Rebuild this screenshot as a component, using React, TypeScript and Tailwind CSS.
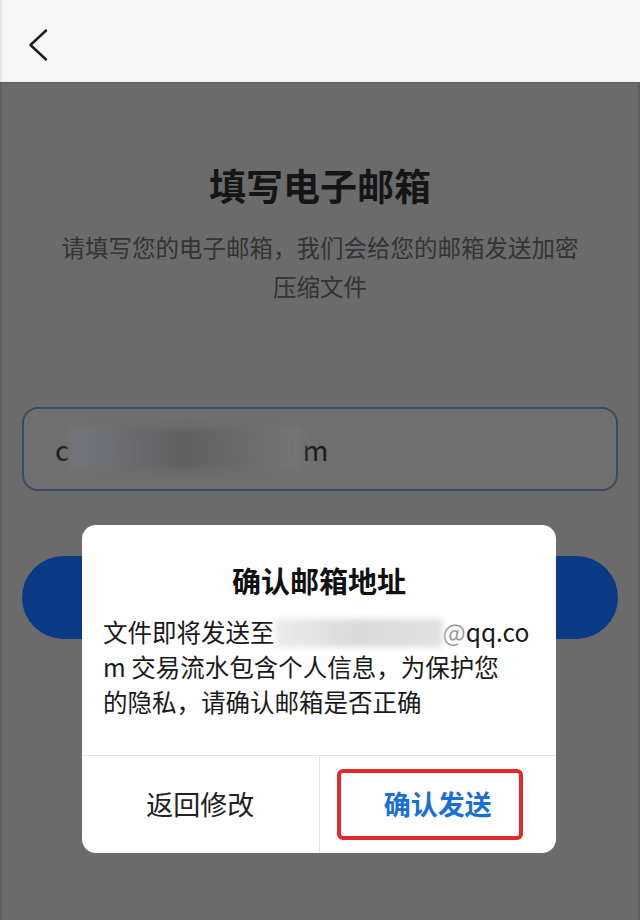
import React from 'react';

const cjk = { fontFamily: '"Noto Sans CJK SC", "Noto Sans", sans-serif' };

function BackIcon() {
  return (
    <svg width="20" height="32" viewBox="0 0 20 32" fill="none">
      <path d="M18 1.5 L2.5 16 L18 30.5" stroke="#1b1b1b" strokeWidth="2.4" strokeLinecap="round" strokeLinejoin="round" />
    </svg>
  );
}

export default function App() {
  return (
    <div className="w-[640px] h-[920px] flex flex-col overflow-hidden" style={cjk}>
      {/* top bar */}
      <div className="h-[82px] shrink-0 bg-[#f6f6f6] border-l-2 border-[#e6e6e6] flex items-center pl-[26px]">
        <div className="mt-[8px]">
          <BackIcon />
        </div>
      </div>

      {/* page behind the mask */}
      <div className="relative flex-1 bg-[#6b6b6b] border-t border-[#5c5c5c] border-x-2 border-x-[#5e5e5e]">
        <div className="flex flex-col items-center pt-[77px]">
          <h1 className="text-[37px] leading-[50px] font-bold text-[#151515]">填写电子邮箱</h1>
          <p className="mt-[18px] w-[530px] text-center text-[23.5px] leading-[39px] text-[#333]">
            请填写您的电子邮箱，我们会给您的邮箱发送加密压缩文件
          </p>

          <div className="mt-[101px] w-[596px] h-[84px] rounded-[16px] border-2 border-[#3b4a66] bg-[#6f6f6f] flex items-center pl-[31px]">
            <span className="text-[28px] text-[#1c1c1c] tracking-tight">c</span>
            <span className="mx-[1px] w-[232px] h-[44px] rounded-md bg-gradient-to-r from-[#767680] via-[#606060] to-[#777777] blur-[5px]" />
            <span className="text-[28px] text-[#1c1c1c]">m</span>
          </div>

          <div className="mt-[65px] w-[596px] h-[83px] rounded-full bg-[#0b3a87]" />
        </div>

        {/* confirm dialog */}
        <div className="absolute left-[80px] top-[442px] w-[474px] h-[328px] rounded-[14px] bg-white flex flex-col">
          <div className="flex-1 px-[21px] pt-[35px]">
            <h2 className="text-center text-[29px] leading-[40px] font-bold text-[#111]">确认邮箱地址</h2>
            <p className="mt-[14px] text-[24.5px] leading-[35px] text-[#1a1a1a] whitespace-nowrap">
              文件即将发送至
              <span className="relative inline-block align-middle w-[168px] h-[28px] -mt-[4px]">
                <span className="absolute inset-0 bg-gradient-to-r from-[#ececec] via-[#d9d9d9] to-[#e2e2e2] blur-[3px]" />
              </span>
              <span className="text-[#9a9a9a]">@</span>
              qq.co
              <br />
              m 交易流水包含个人信息，为保护您
              <br />
              的隐私，请确认邮箱是否正确
            </p>
          </div>
          <div className="h-[98px] border-t border-[#e4e4e4] flex">
            <div className="flex-1 flex items-center justify-center text-[27px] text-[#222]">返回修改</div>
            <div className="relative flex-1 border-l border-[#e4e4e4] flex items-center justify-center text-[27px] font-semibold text-[#1a6fd6]">
              确认发送
              <div className="absolute left-[17px] right-[33px] top-[13px] bottom-[13px] rounded-[6px] border-[4px] border-[#e2282b]" />
            </div>
          </div>
        </div>
      </div>
    </div>
  );
}
